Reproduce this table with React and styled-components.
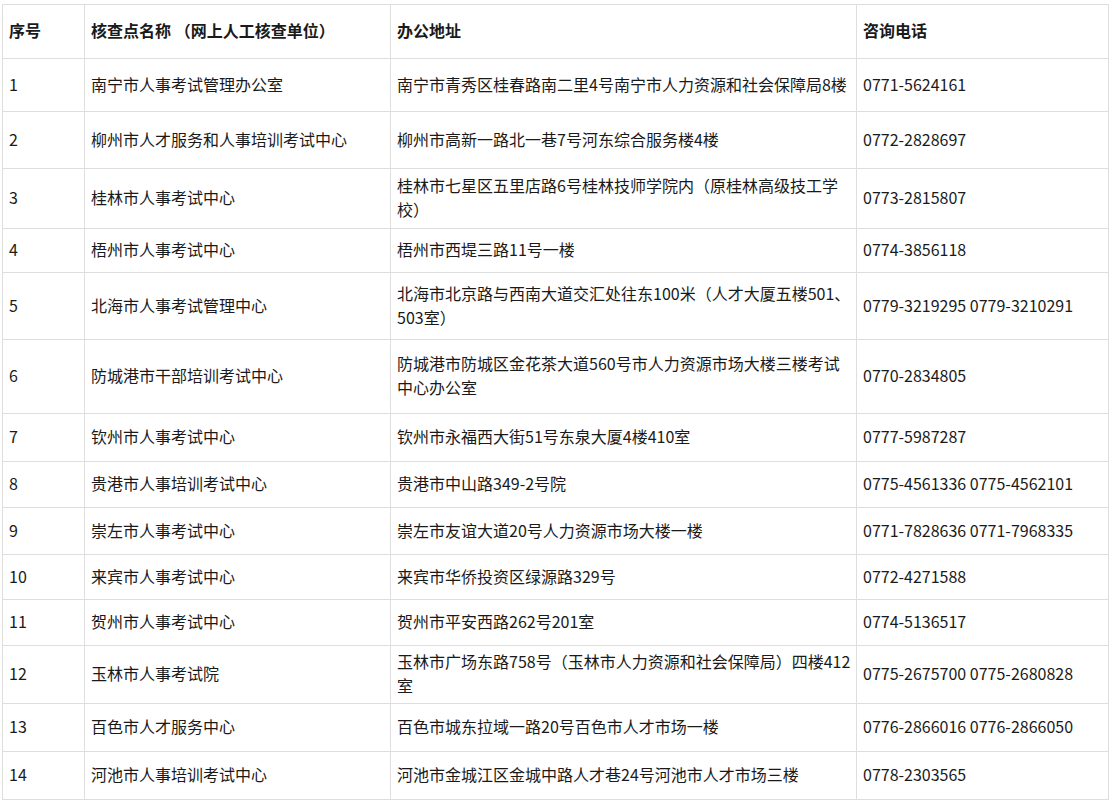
import styled, { createGlobalStyle } from "styled-components";

const GlobalStyle = createGlobalStyle`
  html, body {
    margin: 0;
    padding: 0;
    background: #fff;
  }
  body {
    font-family: "Noto Sans CJK SC", "Noto Sans", sans-serif;
    color: #222;
  }
`;

const rows = [
  { no: "1", name: "南宁市人事考试管理办公室", addr: ["南宁市青秀区桂春路南二里4号南宁市人力资源和社会保障局8楼"], tel: "0771-5624161", h: 53 },
  { no: "2", name: "柳州市人才服务和人事培训考试中心", addr: ["柳州市高新一路北一巷7号河东综合服务楼4楼"], tel: "0772-2828697", h: 57 },
  { no: "3", name: "桂林市人事考试中心", addr: ["桂林市七星区五里店路6号桂林技师学院内（原桂林高级技工学", "校）"], tel: "0773-2815807", h: 60 },
  { no: "4", name: "梧州市人事考试中心", addr: ["梧州市西堤三路11号一楼"], tel: "0774-3856118", h: 44 },
  { no: "5", name: "北海市人事考试管理中心", addr: ["北海市北京路与西南大道交汇处往东100米（人才大厦五楼501、", "503室）"], tel: "0779-3219295 0779-3210291", h: 67 },
  { no: "6", name: "防城港市干部培训考试中心", addr: ["防城港市防城区金花茶大道560号市人力资源市场大楼三楼考试", "中心办公室"], tel: "0770-2834805", h: 74 },
  { no: "7", name: "钦州市人事考试中心", addr: ["钦州市永福西大街51号东泉大厦4楼410室"], tel: "0777-5987287", h: 48 },
  { no: "8", name: "贵港市人事培训考试中心", addr: ["贵港市中山路349-2号院"], tel: "0775-4561336 0775-4562101", h: 46 },
  { no: "9", name: "崇左市人事考试中心", addr: ["崇左市友谊大道20号人力资源市场大楼一楼"], tel: "0771-7828636 0771-7968335", h: 47 },
  { no: "10", name: "来宾市人事考试中心", addr: ["来宾市华侨投资区绿源路329号"], tel: "0772-4271588", h: 45 },
  { no: "11", name: "贺州市人事考试中心", addr: ["贺州市平安西路262号201室"], tel: "0774-5136517", h: 46 },
  { no: "12", name: "玉林市人事考试院", addr: ["玉林市广场东路758号（玉林市人力资源和社会保障局）四楼412", "室"], tel: "0775-2675700 0775-2680828", h: 58 },
  { no: "13", name: "百色市人才服务中心", addr: ["百色市城东拉域一路20号百色市人才市场一楼"], tel: "0776-2866016 0776-2866050", h: 48 },
  { no: "14", name: "河池市人事培训考试中心", addr: ["河池市金城江区金城中路人才巷24号河池市人才市场三楼"], tel: "0778-2303565", h: 48 },
];

const Page = styled.div`
  padding: 4px 0 0 2px;
`;

const Table = styled.table`
  border-collapse: collapse;
  table-layout: fixed;
  width: 1106px;
  font-size: 16px;
  line-height: 24px;
`;

const Row = styled.tr`
  height: ${(p) => p.$h}px;
`;

const Cell = styled.td`
  border: 1px solid #dedede;
  padding: 0 6px 3px;
  vertical-align: middle;
  white-space: nowrap;
  font-weight: ${(p) => (p.$head ? 700 : 400)};
  color: #1a1a1a;
`;

const Line = styled.div`
  white-space: nowrap;
`;

export default function App() {
  return (
    <Page>
      <GlobalStyle />
      <Table>
        <colgroup>
          <col style={{ width: 82 }} />
          <col style={{ width: 306 }} />
          <col style={{ width: 466 }} />
          <col style={{ width: 252 }} />
        </colgroup>
        <tbody>
          <Row $h={54}>
            <Cell $head>序号</Cell>
            <Cell $head>核查点名称 （网上人工核查单位）</Cell>
            <Cell $head>办公地址</Cell>
            <Cell $head>咨询电话</Cell>
          </Row>
          {rows.map((r) => (
            <Row key={r.no} $h={r.h}>
              <Cell>{r.no}</Cell>
              <Cell>{r.name}</Cell>
              <Cell>
                {r.addr.map((l) => (
                  <Line key={l}>{l}</Line>
                ))}
              </Cell>
              <Cell>{r.tel}</Cell>
            </Row>
          ))}
        </tbody>
      </Table>
    </Page>
  );
}
